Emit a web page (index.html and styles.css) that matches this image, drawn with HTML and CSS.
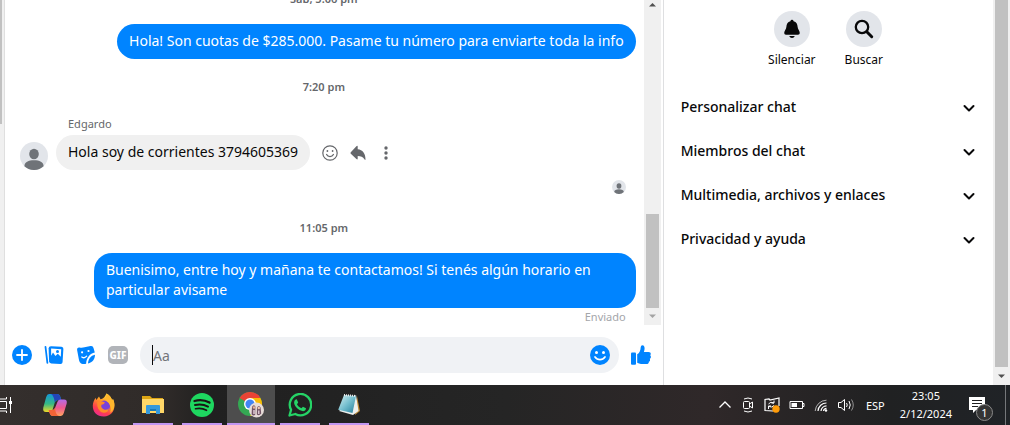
FILE: index.html
```html
<!DOCTYPE html>
<html lang="es">
<head>
<meta charset="utf-8">
<title>Chat</title>
<link rel="stylesheet" href="styles.css">
</head>
<body>
<svg class="defs" aria-hidden="true">
  <symbol id="person" viewBox="0 0 28 28"><circle cx="14" cy="14" r="14" fill="#e2e5ea"/><ellipse cx="14" cy="12" rx="4.8" ry="5.3" fill="#6f7378"/><path d="M4.4 24.2C4.4 20 8.5 18.3 14 18.3S23.6 20 23.6 24.2A14 14 0 0 1 4.4 24.2Z" fill="#6f7378"/></symbol>
  <symbol id="chevron" viewBox="0 0 12 12"><path d="M1.5 4 6 8.5 10.5 4" fill="none" stroke="#080809" stroke-width="2" stroke-linecap="round" stroke-linejoin="round"/></symbol>
</svg>
<div class="screen">
  <main class="app">
    <div class="list-edge"><div class="list-thumb"></div></div>
    <section class="chat">
      <div class="history">
        <div class="messages">
          <time class="stamp">Sáb, 5:06 pm</time>
          <p class="bubble sent">Hola! Son cuotas de $285.000. Pasame tu número para enviarte toda la info</p>
          <time class="stamp">7:20 pm</time>
          <span class="sender">Edgardo</span>
          <div class="incoming">
            <svg class="avatar"><use href="#person"/></svg>
            <p class="bubble received">Hola soy de corrientes 3794605369</p>
            <div class="actions">
              <button class="plain" aria-label="Reaccionar"><svg width="16" height="16" viewBox="0 0 16 16" fill="none" stroke="#65676b"><circle cx="8" cy="8" r="7.2" stroke-width="1.2"/><path d="M4.6 9.5C6 12.3 10 12.3 11.4 9.5" stroke-width="1.3" stroke-linecap="round"/><circle cx="5.4" cy="6" r=".9" fill="#65676b" stroke="none"/><circle cx="10.6" cy="6" r=".9" fill="#65676b" stroke="none"/></svg></button>
              <button class="plain" aria-label="Responder"><svg width="16" height="16" viewBox="0 0 16 16"><path d="M.8 7.2 6.4 1.2Q7.7.2 7.7 1.7V4.2C12.6 4.8 15.5 8.2 15.5 14.3Q15.4 15.5 14.6 14.6C12.9 11.8 10.8 11 7.7 11V13.5Q7.6 15 6.4 14L.8 8.7Q.1 8 .8 7.2Z" fill="#65676b"/></svg></button>
              <button class="plain" aria-label="Más"><svg width="16" height="16" viewBox="0 0 16 16" fill="#65676b"><circle cx="8" cy="3" r="1.7"/><circle cx="8" cy="8" r="1.7"/><circle cx="8" cy="13" r="1.7"/></svg></button>
            </div>
          </div>
          <svg class="seen"><use href="#person"/></svg>
          <time class="stamp">11:05 pm</time>
          <p class="bubble sent long">Buenisimo, entre hoy y mañana te contactamos! Si tenés algún horario en particular avisame</p>
          <span class="status">Enviado</span>
        </div>
        <div class="scrollbar">
          <svg width="9" height="5" viewBox="0 0 9 5"><path d="M1 4.5 4.5 1 8 4.5Z" fill="#505050"/></svg>
          <div class="thumb"></div>
          <svg width="9" height="5" viewBox="0 0 9 5"><path d="M1 .5 4.5 4 8 .5Z" fill="#a3a3a3"/></svg>
        </div>
      </div>
      <form class="composer">
        <button type="button" class="plain" aria-label="Abrir más acciones"><svg width="20" height="20" viewBox="0 0 20 20"><circle cx="10" cy="10" r="10" fill="#0084ff"/><path d="M10 5V15M5 10H15" stroke="#fff" stroke-width="1.8" stroke-linecap="round"/></svg></button>
        <button type="button" class="plain" aria-label="Adjuntar foto"><svg width="20" height="20" viewBox="0 0 20 20"><path d="M1.5 2 3.4 17.8" stroke="#0084ff" stroke-width="1.8" stroke-linecap="round"/><path d="M7.2 1.2 17.5 1.8Q19.5 2 19.4 4L18.6 17Q18.4 19 16.4 18.9L7.2 18.4Q5.2 18.2 5.1 16.2L4.6 3.5Q4.7 1.1 7.2 1.2Z" fill="#0084ff"/><path d="M7.1 3.6 17.2 4.2 16.8 11.8 13.8 8.8 11.4 11 9 7.5 7.2 10.8Z" fill="#fff"/><circle cx="13.5" cy="6.4" r="1.5" fill="#0084ff"/></svg></button>
        <button type="button" class="plain" aria-label="Elegir sticker"><svg width="20" height="20" viewBox="0 0 20 20"><path d="M3.5 2.5Q6 3 8.5 2.3L14.5 1Q17 .5 17.5 3L18.8 7.5C14 8.5 10.5 12.5 10.1 18.8 5.5 19.5 3.5 18.5 2.8 14L1.1 5Q.8 2.2 3.5 2.5Z" fill="#0084ff"/><path d="M19 9.8C18.8 14.5 16.5 17.4 12 18.4 12.3 14 14.7 10.7 19 9.8Z" fill="#0084ff"/><circle cx="6.1" cy="7.3" r="1.1" fill="#fff"/><circle cx="12.5" cy="6" r="1.1" fill="#fff"/><path d="M5.8 12Q8.5 13.8 10.6 11.2" fill="none" stroke="#fff" stroke-width="1.3" stroke-linecap="round"/></svg></button>
        <button type="button" class="gif" aria-label="Elegir GIF">GIF</button>
        <div class="field">
          <input class="text" type="text" placeholder="Aa" aria-label="Mensaje">
          <button type="button" class="plain" aria-label="Elegir emoji"><svg width="20" height="20" viewBox="0 0 20 20"><circle cx="10" cy="10" r="10" fill="#0084ff"/><circle cx="6.5" cy="7.4" r="1.5" fill="#fff"/><circle cx="13.5" cy="7.4" r="1.5" fill="#fff"/><path d="M5 12C7.5 15.6 12.5 15.6 15 12" fill="none" stroke="#fff" stroke-width="1.7" stroke-linecap="round"/></svg></button>
        </div>
        <button type="button" class="plain" aria-label="Me gusta"><svg width="20" height="20" viewBox="0 0 20 20" fill="#0084ff"><rect y="7.5" width="5" height="12.3" rx="1"/><path d="M6.2 9.2C8.5 8.2 9.6 5.5 9.7 2.2Q9.8.2 11.5.2C14 .2 14 4 12.9 6.9H17.5C20 6.9 20.3 9.2 19.2 10.3 20.4 11.5 20 13.2 18.8 13.8 19.4 15.2 18.8 16.4 17.8 16.8 18 18.3 17 18.9 15.6 18.9H10Q8 18.8 6.2 17.8Z"/></svg></button>
      </form>
    </section>
    <aside class="details">
      <div class="shortcuts">
        <button class="shortcut"><span class="disc"><svg width="20" height="20" viewBox="0 0 20 20" fill="#080809"><path d="M10 .8Q11.3.8 11.6 2.2C14.4 2.9 15.5 5 15.6 7.8 15.7 10.3 17.8 12 17.8 14Q17.8 15.8 16 15.8H4Q2.2 15.8 2.2 14C2.2 12 4.3 10.3 4.4 7.8 4.5 5 5.6 2.9 8.4 2.2Q8.7.8 10 .8Z"/><path d="M7.2 17H12.8Q12 19 10 19T7.2 17Z"/></svg></span>Silenciar</button>
        <button class="shortcut"><span class="disc"><svg width="20" height="20" viewBox="0 0 20 20" fill="none" stroke="#080809" stroke-linecap="round"><circle cx="8" cy="8" r="6.2" stroke-width="2.3"/><path d="M12.8 12.8 17.7 17.7" stroke-width="3"/></svg></span>Buscar</button>
      </div>
      <button class="section">Personalizar chat<svg><use href="#chevron"/></svg></button>
      <button class="section">Miembros del chat<svg><use href="#chevron"/></svg></button>
      <button class="section">Multimedia, archivos y enlaces<svg><use href="#chevron"/></svg></button>
      <button class="section">Privacidad y ayuda<svg><use href="#chevron"/></svg></button>
    </aside>
    <div class="scrollbar page-bar">
      <div class="thumb"></div>
      <svg width="9" height="5" viewBox="0 0 9 5"><path d="M1 .5 4.5 4 8 .5Z" fill="#505050"/></svg>
    </div>
  </main>
  <footer class="taskbar">
    <button class="task first" aria-label="Vista de tareas"><svg width="12" height="16" viewBox="0 0 12 16" fill="none" stroke="#fff"><path d="M0 4.5H6.5V11.5H0M0 2H6.5V0M0 14H6.5V16M10.5 0V16"/><path d="M9 5.5H12" stroke-width="3"/></svg></button>
    <button class="task" aria-label="Copilot"><svg width="26" height="24" viewBox="0 0 26 24">
      <defs><linearGradient id="ca" x2="0" y2="1"><stop stop-color="#1597d8"/><stop offset=".55" stop-color="#36b984"/><stop offset="1" stop-color="#f0d827"/></linearGradient><linearGradient id="cb" x2="0" y2="1"><stop stop-color="#b36be8"/><stop offset=".5" stop-color="#ef5990"/><stop offset="1" stop-color="#ffa45f"/></linearGradient></defs>
      <path d="M7 1H15Q17.5 1 18.4 4L19.3 7H16Q13.6 7 12.8 9.5L10.5 17Q9.7 19 7.5 19H4Q.5 19 1.3 14.5L4.2 4Q5 1 7 1Z" fill="url(#ca)"/><path d="M9 1H15Q17.5 1 18.4 4L19.3 7H16Q13.6 7 12.8 9.5Q12 2.5 9 1Z" fill="#2345b8"/>
      <path d="M19 23H11Q8.5 23 7.6 20L6.7 17H10Q12.4 17 13.2 14.5L15.5 8.8Q16.3 6.5 18.5 6.5H22Q25.5 6.5 24.7 10.5L21.8 20Q21 23 19 23Z" fill="url(#cb)"/><path d="M6.7 17H10Q12.4 17 13.2 14.5Q12.8 21 17 23H11Q8.5 23 7.6 20Z" fill="#f26437"/></svg></button>
    <button class="task" aria-label="Firefox"><svg width="24" height="24" viewBox="0 0 24 24">
      <defs><linearGradient id="fa" x1=".8" y1="0" x2=".3" y2="1"><stop stop-color="#fff04a"/><stop offset=".4" stop-color="#ff9a24"/><stop offset=".75" stop-color="#ff3d4d"/><stop offset="1" stop-color="#e92b91"/></linearGradient></defs>
      <path d="M14.5.5C18 2.5 19.5 5 20 7.2L21 6C25 15 20.5 23.5 12 23.5 4.5 23.5.6 18.5.8 12.5 1 9 2.2 7 3.5 4.7L4.3 7 7 3.5 8.5 6.3C11 5.7 12.5 4.5 14.5.5Z" fill="url(#fa)"/><circle cx="12.2" cy="13.3" r="5.8" fill="#7942d9"/><path d="M5.2 8.8Q9 7 13 9.6 11.5 11.8 9.5 11.8 8.4 15 12 16.5 14.7 17.5 17 15.2 16 20 11.5 19.7 4.5 18.5 5.2 8.8Z" fill="#ff8a28"/><path d="M14.5.5C18 2.5 19.5 5 20 7.2L21 6C24 13 21.5 17.5 18.2 19.8 20 15 18 10 14.8 8.5 13 6 14.5 3 14.5.5Z" fill="#ffb62d"/></svg></button>
    <button class="task open" aria-label="Explorador de archivos"><svg width="22" height="18" viewBox="0 0 22 18"><path d="M0 0H8L10 2H21V6H0Z" fill="#dda514"/><path d="M0 3H22V17H0Z" fill="#ffd768"/><path d="M4 18V10Q4 9 5 9H17Q18 9 18 10V18H14V13H8V18Z" fill="#3599dc"/><path d="M8 13H14V15H8Z" fill="#1779bb"/></svg></button>
    <button class="task open" aria-label="Spotify"><svg width="24" height="24" viewBox="0 0 24 24"><circle cx="12" cy="12" r="12" fill="#1ed760"/><g fill="none" stroke="#191414" stroke-linecap="round"><path d="M4.5 8C9 6.7 15 7.1 19.5 9.6" stroke-width="2.3"/><path d="M5 12C9.2 10.9 14 11.4 18 13.6" stroke-width="2"/><path d="M5.5 15.8C9.2 14.9 13 15.3 16.5 17.3" stroke-width="1.6"/></g></svg></button>
    <button class="task open active" aria-label="Chrome"><svg width="26" height="26" viewBox="0 0 26 26"><circle cx="12" cy="12" r="12" fill="#34a853"/><path d="M12 12 1.6 6A12 12 0 0 1 22.4 6Z" fill="#ea4335"/><path d="M12 12V6H22.4A12 12 0 0 1 12 24L17 15Z" fill="#fbbc04"/><circle cx="12" cy="12" r="6" fill="#fff"/><circle cx="12" cy="12" r="4.6" fill="#4285f4"/><circle cx="18.5" cy="18" r="7.5" fill="#e7dcd8"/><path d="M13.6 22.5 14 15Q15.5 12 17.4 14.5L17.2 23Q15 24 13.6 22.5ZM18.8 22.5 19 15.5Q20.8 12.5 22.6 15.5L23.2 21.5Q21 24.5 18.8 22.5Z" fill="#725565"/><circle cx="16" cy="15.5" r="1.2" fill="#e6b49d"/><circle cx="20.8" cy="16" r="1.2" fill="#efc7b1"/><path d="M15.2 18H16.8V22H15.2ZM20 18.5H21.5V22H20Z" fill="#d8c3cd"/></svg></button>
    <button class="task open" aria-label="WhatsApp"><svg width="24" height="24" viewBox="0 0 24 24"><path d="M1.5 22.5 3.1 16.8A10.7 10.7 0 1 1 7.3 21Z" fill="none" stroke="#25d366" stroke-width="2.3" stroke-linejoin="round"/><path d="M8.7 6.2 10.2 9.5 9 11.3C10.2 13.5 11.4 14.5 13.5 15.3L14.9 13.7 18 15.2C18 17.5 16 18.4 14.3 18.1 10.2 17.1 7.3 14 6.3 11 5.7 8.3 6.8 6 8.7 6.2Z" fill="#25d366"/></svg></button>
    <button class="task open" aria-label="Bloc de notas"><svg width="24" height="24" viewBox="0 0 24 24"><defs><linearGradient id="na" x2="1" y2="1"><stop stop-color="#d9f0f1"/><stop offset=".5" stop-color="#75bfcf"/><stop offset="1" stop-color="#247e9b"/></linearGradient></defs><path d="M20 3 23 18 18 22Z" fill="#b98835"/><path d="M19 2 21.5 18 16 22 2 18Z" fill="#edf0ee"/><path d="M7 2 19 3 15.5 20 1.2 16.8Z" fill="url(#na)"/><path d="M7 2 19 3" stroke="#eee" stroke-width="2" stroke-dasharray="1 1"/></svg></button>
    <div class="tray">
      <button class="plain" aria-label="Mostrar iconos ocultos"><svg width="14" height="16" viewBox="0 0 14 16"><path d="M1.5 10.5 7 5 12.5 10.5" fill="none" stroke="#fff" stroke-width="1.3"/></svg></button>
      <button class="plain" aria-label="Reunirse ahora"><svg width="14" height="16" viewBox="0 0 14 16" fill="none" stroke="#fff"><rect x="2.5" y="4.5" width="6" height="7" rx="1"/><path d="M8.5 7 11.5 5V11L8.5 9M3 2Q7 0 11 2M3 14Q7 16 11 14"/></svg></button>
      <button class="plain" aria-label="Actualización"><svg width="16" height="16" viewBox="0 0 16 16"><path d="M9 14 1 13.5V2.5L5 2 6 3 15 1V9" fill="none" stroke="#fff" stroke-width="1.2"/><path d="M4.5 7Q6.5 4 10 6M10 3.5V6H7.5M10 8.5Q8 11 5 9.5M4.5 12V9H7" fill="none" stroke="#fff"/><circle cx="12" cy="12" r="3.7" fill="#ff9c0a"/></svg></button>
      <button class="plain" aria-label="Batería"><svg width="16" height="16" viewBox="0 0 16 16"><path d="M1 4.5H13.5V11.5H1ZM13.5 6.5H15V9.5H13.5" fill="none" stroke="#fff"/><path d="M2.5 6H8V10H2.5Z" fill="#fff"/></svg></button>
      <button class="plain" aria-label="Red"><svg width="14" height="16" viewBox="0 0 14 16" fill="none" stroke="#fff"><path d="M1.2 14A11.5 11.5 0 0 1 12.5 3.2" opacity=".65"/><path d="M4 14A8.5 8.5 0 0 1 12.5 6M7 14A5.7 5.7 0 0 1 12.5 8.8M9.5 14A3.2 3.2 0 0 1 12.5 11.3" stroke-width="1.2"/><circle cx="12" cy="13.5" r="1.2" fill="#fff" stroke="none"/></svg></button>
      <button class="plain" aria-label="Volumen"><svg width="18" height="16" viewBox="0 0 18 16" fill="none" stroke="#fff"><path d="M1.5 5.5H4L7.5 2.5V13.5L4 10.5H1.5Z"/><path d="M9.5 6Q11 8 9.5 10M12 4Q14.5 8 12 12"/><path d="M14.5 2.5Q18 8 14.5 13.5" opacity=".5"/></svg></button>
      <span class="lang">ESP</span>
      <time class="clock">23:05<br>2/12/2024</time>
      <button class="plain notice" aria-label="Notificaciones"><svg width="16" height="16" viewBox="0 0 16 16"><path d="M0 0H16V13H7L4 16V13H0Z" fill="#fff"/><path d="M3 3.5H13M3 6.5H13M3 9.5H9" stroke="#202020"/></svg><span class="count">1</span></button>
      <i class="peek"></i>
    </div>
  </footer>
</div>
</body>
</html>
```
FILE: styles.css
```css
* { box-sizing: border-box; }
body { margin: 0; font-family: "Segoe UI", "Noto Sans", "Open Sans", sans-serif; color: #080809; background: #fff; }
button { font: inherit; color: inherit; border: 0; padding: 0; background: none; }
p { margin: 0; }
svg { display: block; flex: none; }
.defs { width: 0; height: 0; position: absolute; }
.screen { height: 100vh; display: flex; flex-direction: column; overflow: hidden; }
.app { flex: 1; min-height: 0; display: grid; grid-template: minmax(0, 1fr) / 5px minmax(0, 2fr) minmax(0, 1fr) 17px; }
.plain { display: flex; flex: none; }

.list-edge { background: #f0f0f0; border-right: 1px solid #dfdfdf; }
.list-thumb { width: 2px; height: 124px; background: #c1c1c1; }

.chat { min-width: 0; display: flex; flex-direction: column; border-right: 1px solid #dedfe1; }
.history { flex: 1; min-height: 0; display: flex; padding-right: 2px; }
.messages { flex: 1; min-width: 0; display: flex; flex-direction: column; justify-content: flex-end; overflow: hidden; padding: 0 8px 0 15px; }
.stamp { align-self: center; margin-right: 8px; padding: 20px 0 17px; font-size: 11px; line-height: 16px; font-weight: 600; color: #65676b; }
.bubble { padding: 7px 12px 8px; border-radius: 18px; font-size: 14px; line-height: 20px; }
.sent { align-self: flex-end; color: #fff; background: #0084ff; }
.long { max-width: 88%; }
.sender { margin: 0 48px; padding: 4px 0 3px; font-size: 11px; line-height: 16px; color: #65676b; }
.incoming { display: flex; align-items: flex-end; gap: 8px; }
.avatar { width: 28px; height: 28px; }
.received { background: #f0f0f0; }
.actions { display: flex; align-self: center; gap: 12px; padding-left: 4px; }
.seen { width: 14px; height: 14px; align-self: flex-end; margin: 10px 10px 6px 0; }
.status { align-self: flex-end; margin-right: 10px; font-size: 11px; line-height: 17px; color: #a4a6aa; }

.scrollbar { width: 17px; flex: none; display: flex; flex-direction: column; align-items: center; justify-content: space-between; padding: 2px 0 6px; background: #f0f0f0; }
.thumb { width: 13px; background: #c1c1c1; }
.history .thumb { height: 94px; margin: auto 0 6px; }
.page-bar { padding-top: 0; }
.page-bar .thumb { flex: 1; margin-bottom: 7px; }

.composer { display: flex; align-items: center; gap: 12px; padding: 12px 12px 12px 7px; }
.gif { width: 20px; height: 18px; border-radius: 5px; background: #b1b4b9; color: #fff; font-size: 10px; line-height: 18px; font-weight: 800; }
.field { flex: 1; min-width: 0; display: flex; align-items: center; height: 36px; padding: 0 9px 0 12px; border-radius: 18px; background: #f0f2f5; }
.text { flex: 1; min-width: 0; height: 20px; padding: 0; border: 0; border-left: 1px solid #080809; outline: 0; background: none; font: inherit; font-size: 14px; }
.text::placeholder { color: #737579; opacity: 1; }

.details { min-width: 0; padding: 11px 18px 0 17px; }
.shortcuts { display: flex; justify-content: center; gap: 16px; margin-bottom: 15px; }
.shortcut { width: 56px; display: flex; flex-direction: column; align-items: center; gap: 4px; font-size: 12px; line-height: 18px; }
.disc { width: 36px; height: 36px; border-radius: 50%; display: grid; place-items: center; background: #e2e5ea; }
.section { width: 100%; height: 44px; display: flex; align-items: center; justify-content: space-between; font-size: 14px; font-weight: 500; text-align: left; }
.section svg { width: 12px; height: 12px; margin-top: 3px; }

.taskbar { height: 40px; flex: none; display: flex; gap: 1px; color: #fff; background: linear-gradient(90deg, #342f2d 0, #302b29 16%, #202020 21%, #252525 50%, #2f2829 70%, #202122 88%, #202327 100%); }
.task { width: 48px; flex: none; display: grid; place-items: center; }
.first { width: 30px; justify-items: start; }
.open { background: linear-gradient(#c196f2, #c196f2) bottom / 40px 2px no-repeat; }
.active { background-color: #4d4d4d; background-size: 100% 2px; }
.tray { display: flex; align-items: center; gap: 9px; margin-left: auto; padding-right: 4px; }
.lang { margin-left: 2px; font-size: 11px; }
.clock { padding: 0 6px; font-size: 11px; line-height: 18px; text-align: center; }
.notice { position: relative; margin: 0 11px 0 2px; }
.count { position: absolute; left: 7px; top: 7px; width: 17px; height: 17px; border: 1px solid #8b8b8b; border-radius: 50%; background: #343434; font-size: 11px; line-height: 15px; text-align: center; }
.peek { width: 1px; height: 40px; background: #75777a; }
```
